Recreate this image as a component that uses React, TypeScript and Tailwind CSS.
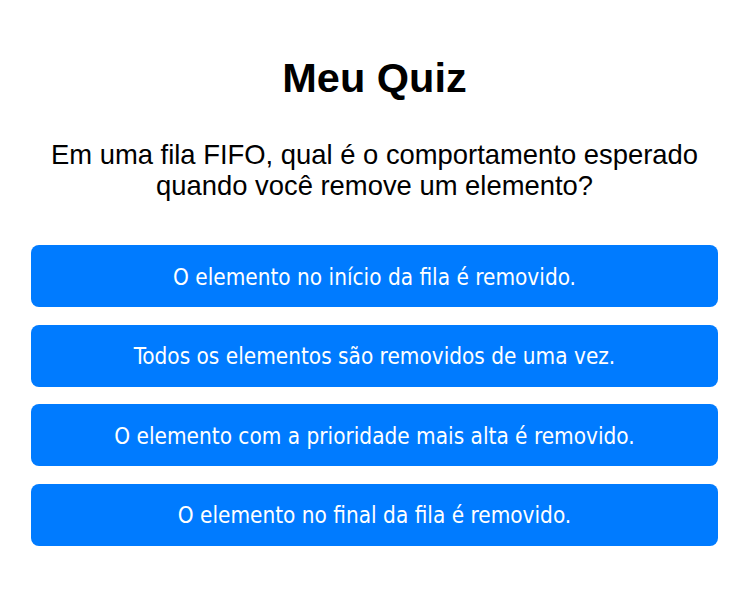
import React from 'react'

const QUESTION = 'Em uma fila FIFO, qual é o comportamento esperado quando você remove um elemento?'

const OPTIONS = [
  'O elemento no início da fila é removido.',
  'Todos os elementos são removidos de uma vez.',
  'O elemento com a prioridade mais alta é removido.',
  'O elemento no final da fila é removido.',
]

export default function App() {
  return (
    <div className="min-h-screen bg-white px-[31px] pt-[54px] font-['Liberation_Sans',Arial,sans-serif] text-black">
      <h1 className="text-center text-[41.5px] font-bold leading-[47px]">Meu Quiz</h1>

      <p className="mx-auto mt-[38px] max-w-[670px] text-center text-[27.4px] leading-[31px]">{QUESTION}</p>

      <div className="mt-[44px] flex flex-col gap-[17.5px]">
        {OPTIONS.map((opt) => (
          <button
            key={opt}
            className="h-[62px] w-full cursor-pointer rounded-[8px] bg-[#007bff] pt-[3px] text-center font-['DejaVu_Sans_Condensed','DejaVu_Sans',sans-serif] text-[22.4px] text-white font-stretch-condensed"
          >
            {opt}
          </button>
        ))}
      </div>
    </div>
  )
}
